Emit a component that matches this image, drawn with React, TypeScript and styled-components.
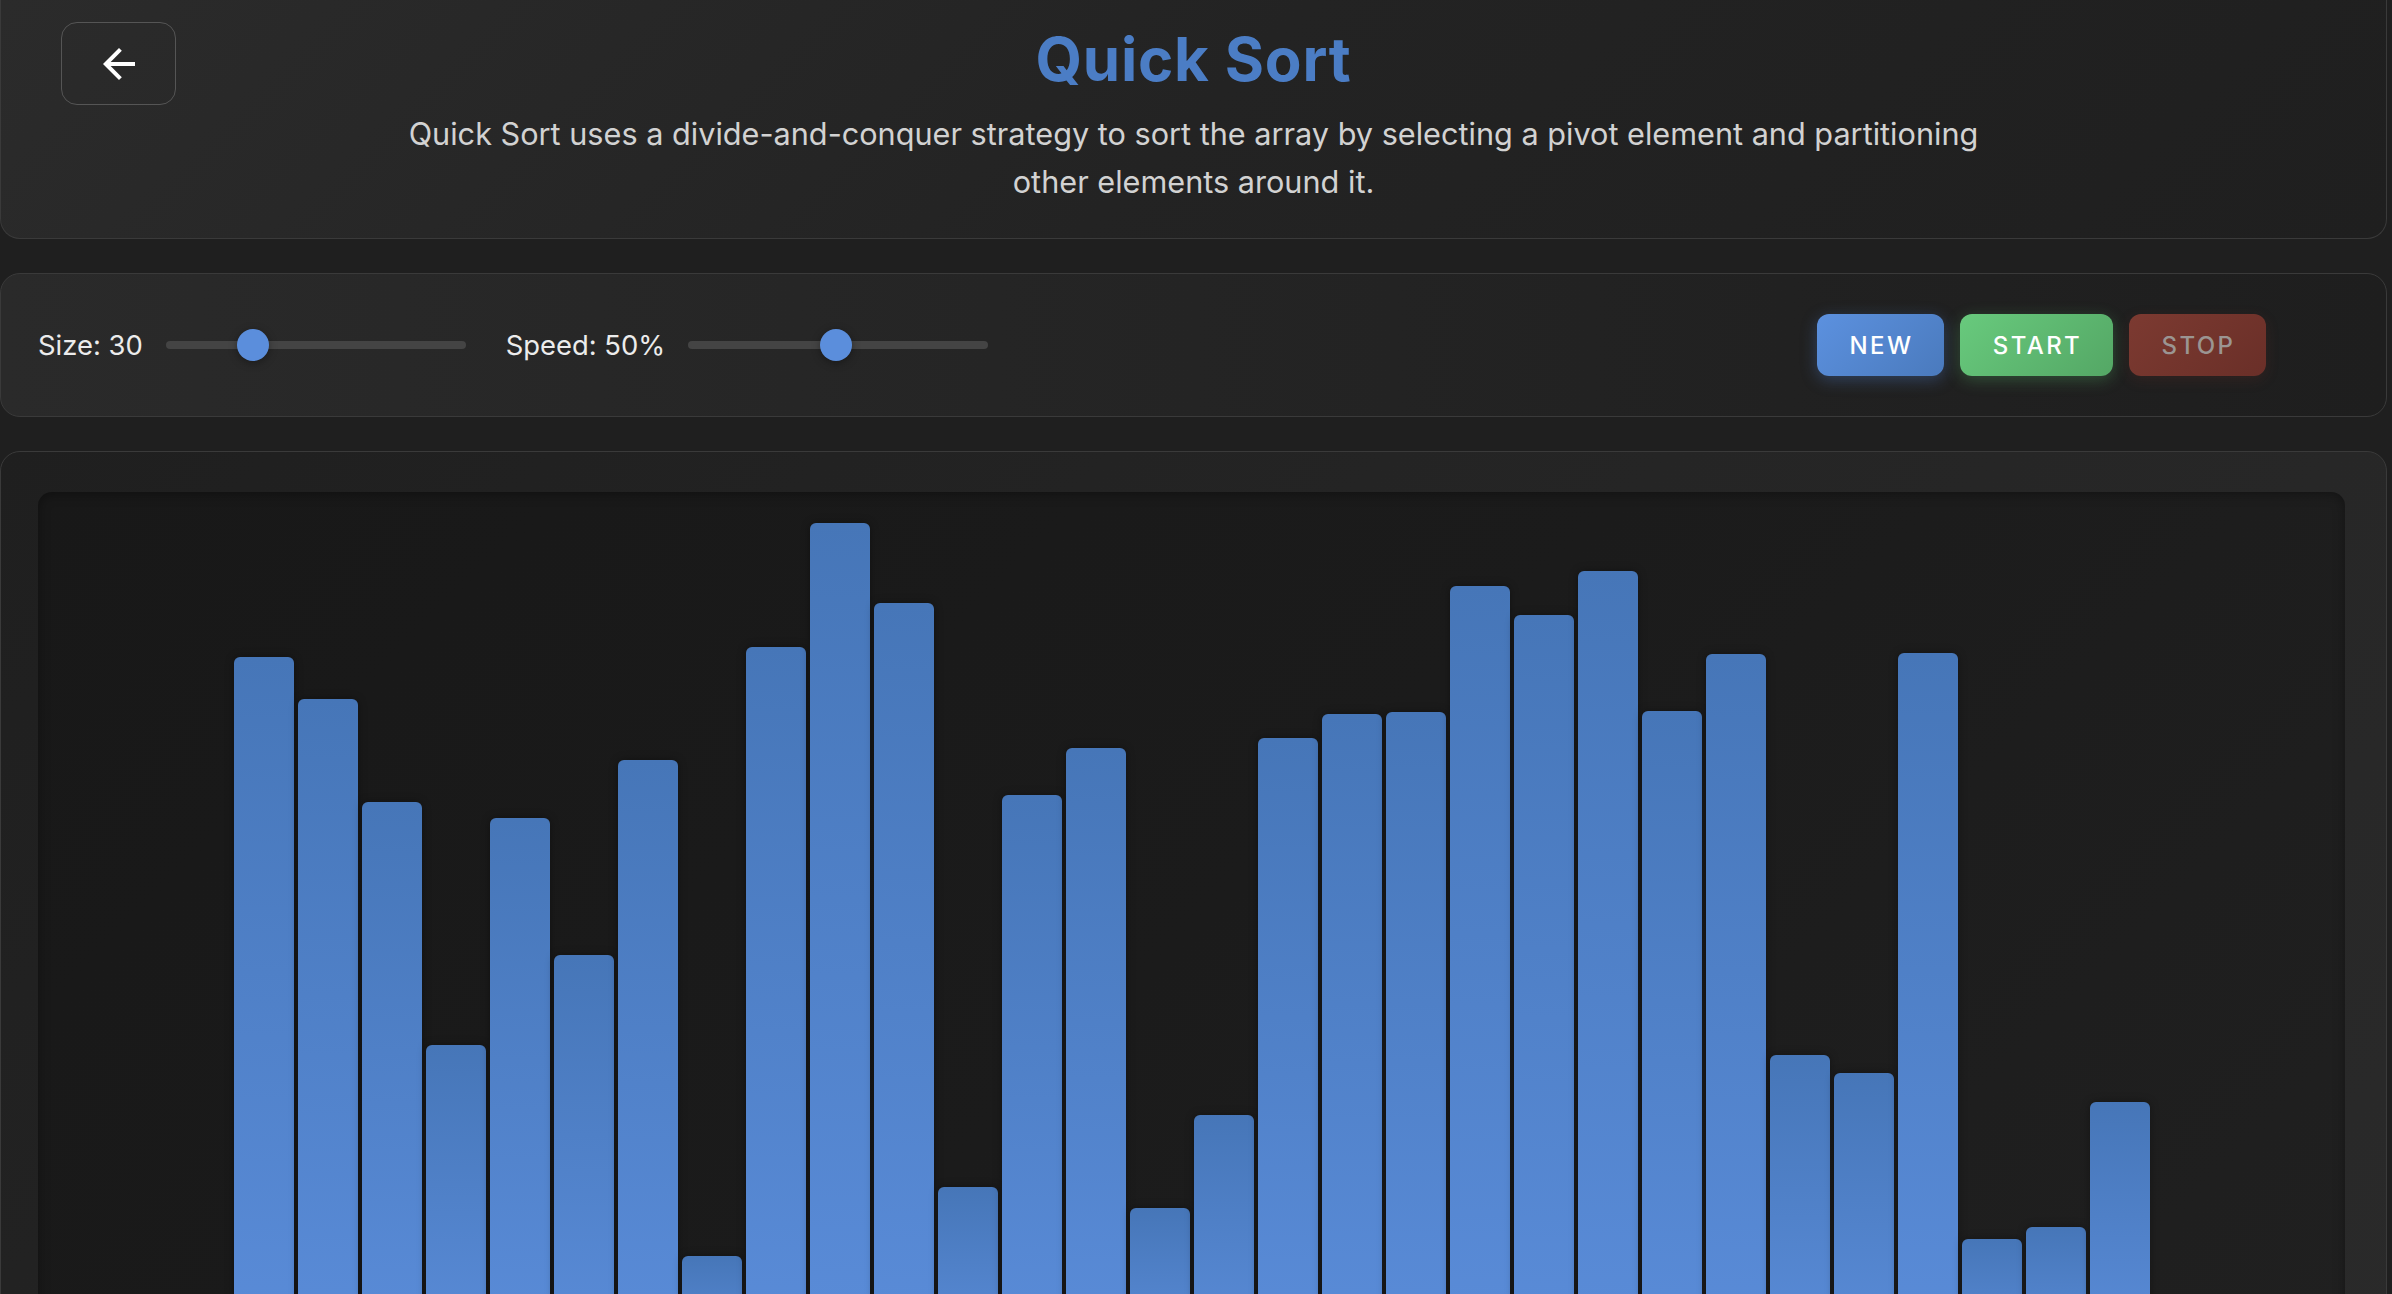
import React from "react";
import styled, { createGlobalStyle } from "styled-components";
import { MdArrowBack } from "react-icons/md";

const GlobalStyle = createGlobalStyle`
  html, body {
    margin: 0;
    padding: 0;
    background: #1f1f1f;
    font-family: Inter, "Noto Sans", "Liberation Sans", sans-serif;
    color: #e8e8e8;
  }
  * { box-sizing: border-box; }
`;

const Page = styled.div`
  display: flex;
  flex-direction: column;
  gap: 34px;
  padding: 0 5px 40px 0;
  min-height: 100vh;
  background: #1f1f1f;
`;

const HeaderPanel = styled.header`
  display: grid;
  grid-template-columns: 1fr auto 1fr;
  row-gap: 5px;
  padding: 22px 60px 32px;
  background: linear-gradient(135deg, #2b2b2b 0%, #232323 50%, #1f1f1f 100%);
  border: 1px solid #3a3a3a;
  border-top: none;
  border-radius: 0 0 20px 20px;
`;

const BackButton = styled.button`
  justify-self: start;
  width: 115px;
  height: 83px;
  display: flex;
  align-items: center;
  justify-content: center;
  background: transparent;
  border: 1.5px solid #555555;
  border-radius: 16px;
  color: #ffffff;
  cursor: pointer;
  padding: 0;
`;

const Title = styled.h1`
  margin: 1px 0 0;
  font-size: 60px;
  line-height: 72px;
  font-weight: 700;
  color: #4b7dc5;
  letter-spacing: 0.8px;
  text-align: center;
`;

const Description = styled.p`
  grid-column: 1 / -1;
  justify-self: center;
  max-width: 1620px;
  margin: 0;
  font-size: 30.65px;
  line-height: 48px;
  color: #d2d2d2;
  text-align: center;
`;

const ControlsPanel = styled.section`
  display: flex;
  align-items: center;
  justify-content: space-between;
  padding: 40px 120px 40px 37px;
  background: linear-gradient(90deg, #2a2a2a 0%, #242424 50%, #1e1e1e 100%);
  border: 1px solid #3a3a3a;
  border-radius: 20px;
`;

const SliderGroup = styled.div`
  display: flex;
  align-items: center;
  gap: 40px;
`;

const SliderField = styled.label`
  display: flex;
  align-items: center;
  gap: 23px;
`;

const SliderLabel = styled.span`
  font-size: 27.4px;
  color: #ececec;
  white-space: nowrap;
`;

const Track = styled.div`
  position: relative;
  width: 300px;
  height: 8px;
  border-radius: 4px;
  background: #444444;
`;

const Thumb = styled.div`
  position: absolute;
  top: 50%;
  width: 32px;
  height: 32px;
  border-radius: 50%;
  background: #5b8edc;
  transform: translate(-50%, -50%);
  box-shadow: 0 2px 8px rgba(0, 0, 0, 0.35);
`;

const ButtonRow = styled.div`
  display: flex;
  gap: 16px;
`;

type Variant = "blue" | "green" | "red";

const variantBg: Record<Variant, string> = {
  blue: "linear-gradient(135deg, #5c91df 0%, #4a7abd 100%)",
  green: "linear-gradient(135deg, #68ca7d 0%, #54a765 100%)",
  red: "linear-gradient(135deg, #7c3a31 0%, #6a2f28 100%)",
};

const variantShadow: Record<Variant, string> = {
  blue: "0 4px 16px rgba(80, 130, 210, 0.35)",
  green: "0 4px 16px rgba(90, 190, 110, 0.3)",
  red: "0 4px 14px rgba(120, 50, 40, 0.2)",
};

const ActionButton = styled.button<{ $variant: Variant; $w: number }>`
  width: ${(p) => p.$w}px;
  height: 62px;
  border: none;
  border-radius: 12px;
  background: ${(p) => variantBg[p.$variant]};
  box-shadow: ${(p) => variantShadow[p.$variant]};
  color: ${(p) => (p.$variant === "red" ? "#9b9592" : "#ffffff")};
  font-family: Inter, "Noto Sans", "Liberation Sans", sans-serif;
  font-size: 24px;
  font-weight: 500;
  letter-spacing: 2.4px;
  text-transform: uppercase;
  cursor: pointer;
  padding: 0 0 0 2px;
`;

const ChartPanel = styled.section`
  padding: 40px 41px 40px 37px;
  background: linear-gradient(135deg, #1f1f1f 0%, #252525 50%, #2a2a2a 100%);
  border: 1px solid #3a3a3a;
  border-radius: 20px;
`;

const ChartArea = styled.div`
  height: 880px;
  display: flex;
  align-items: flex-end;
  justify-content: center;
  gap: 4px;
  padding-bottom: 20px;
  border-radius: 14px;
  background: linear-gradient(135deg, #181818 0%, #1b1b1b 50%, #202020 100%);
  box-shadow: inset 0 2px 12px rgba(0, 0, 0, 0.35);
`;

const Bar = styled.div`
  width: 60px;
  border-radius: 6px 6px 0 0;
  background: linear-gradient(to bottom, #4676b8 0%, #5a8cd9 100%);
  box-shadow: 0 0 8px rgba(0, 0, 0, 0.35);
`;

// bar tops in page pixels
const tops = [
  657, 699, 802, 1045, 818, 955, 760, 1256, 647, 523, 603, 1187, 795, 748, 1208,
  1115, 738, 714, 712, 586, 615, 571, 711, 654, 1055, 1073, 653, 1239, 1227, 1102,
];
const BAR_BOTTOM = 492 + 880 - 20;

export default function App() {
  return (
    <>
      <GlobalStyle />
      <Page>
        <HeaderPanel>
          <BackButton aria-label="Back">
            <MdArrowBack size={48} />
          </BackButton>
          <Title>Quick Sort</Title>
          <span />
          <Description>
            Quick Sort uses a divide-and-conquer strategy to sort the array by selecting a
            pivot element and partitioning other elements around it.
          </Description>
        </HeaderPanel>

        <ControlsPanel>
          <SliderGroup>
            <SliderField>
              <SliderLabel>Size: 30</SliderLabel>
              <Track>
                <Thumb style={{ left: "29%" }} />
              </Track>
            </SliderField>
            <SliderField>
              <SliderLabel>Speed: 50%</SliderLabel>
              <Track>
                <Thumb style={{ left: "49.3%" }} />
              </Track>
            </SliderField>
          </SliderGroup>
          <ButtonRow>
            <ActionButton $variant="blue" $w={127}>New</ActionButton>
            <ActionButton $variant="green" $w={153}>Start</ActionButton>
            <ActionButton $variant="red" $w={137}>Stop</ActionButton>
          </ButtonRow>
        </ControlsPanel>

        <ChartPanel>
          <ChartArea>
            {tops.map((t, i) => (
              <Bar key={i} style={{ height: `${BAR_BOTTOM - t}px` }} />
            ))}
          </ChartArea>
        </ChartPanel>
      </Page>
    </>
  );
}
